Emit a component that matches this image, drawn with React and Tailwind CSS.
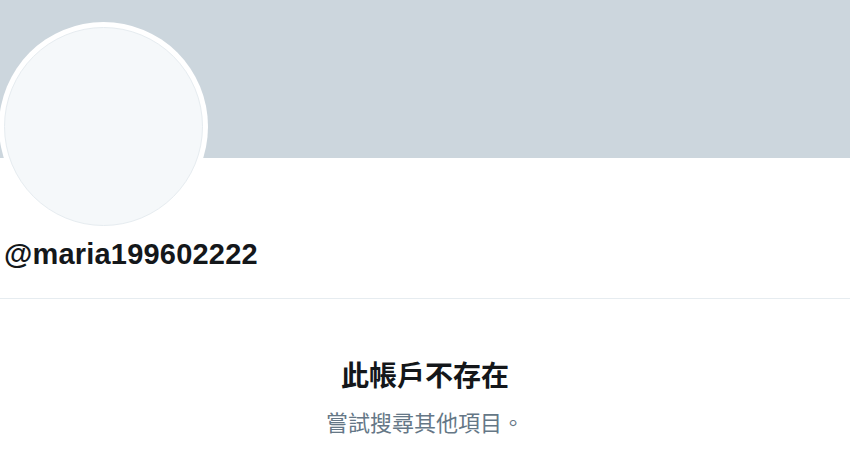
const App = () => {
  return (
    <div className="w-[850px] h-[450px] overflow-hidden bg-white font-['Liberation_Sans','Noto_Sans_CJK_TC',sans-serif]">
      <div className="h-[158px] bg-[#CCD6DD]" />

      <div className="flex flex-col items-start h-[141px] border-b border-[#E6ECF0]">
        <div className="-mt-[136px] -ml-[1px] w-[209px] h-[209px] rounded-full bg-white p-[5px]">
          <div className="w-full h-full rounded-full bg-[#F5F8FA] border border-[#E6ECF0]" />
        </div>
        <h2 className="mt-[6px] ml-[4px] text-[29px] leading-[34px] font-bold text-[#14171A] tracking-[0.2px]">@maria199602222</h2>
      </div>

      <div className="flex flex-col items-center pt-[60px]">
        <h1 className="text-[28px] leading-[36px] font-bold text-[#14171A]">此帳戶不存在</h1>
        <p className="mt-[16px] text-[22px] leading-[26px] text-[#657786]">嘗試搜尋其他項目。</p>
      </div>
    </div>
  );
};

export default App;
